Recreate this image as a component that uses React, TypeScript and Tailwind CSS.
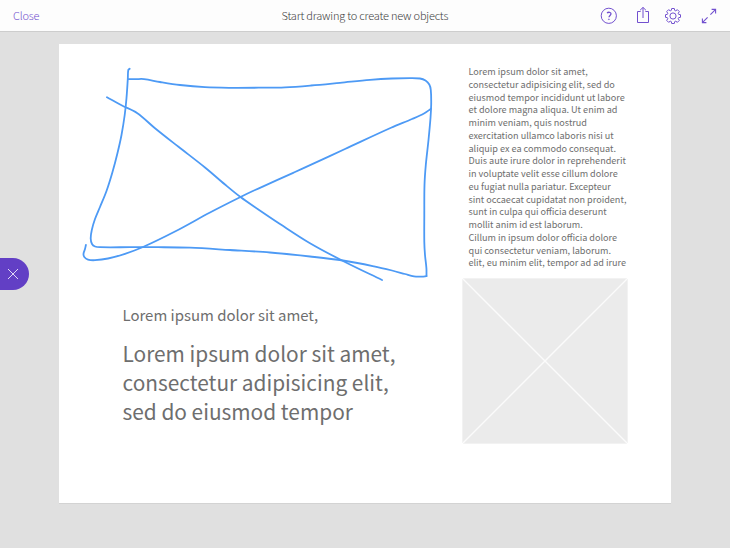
const bodyLines = [
  'Lorem ipsum dolor sit amet,',
  'consectetur adipisicing elit, sed do',
  'eiusmod tempor incididunt ut labore',
  'et dolore magna aliqua. Ut enim ad',
  'minim veniam, quis nostrud',
  'exercitation ullamco laboris nisi ut',
  'aliquip ex ea commodo consequat.',
  'Duis aute irure dolor in reprehenderit',
  'in voluptate velit esse cillum dolore',
  'eu fugiat nulla pariatur. Excepteur',
  'sint occaecat cupidatat non proident,',
  'sunt in culpa qui officia deserunt',
  'mollit anim id est laborum.',
  'Cillum in ipsum dolor officia dolore',
  'qui consectetur veniam, laborum.',
  'elit, eu minim elit, tempor ad ad irure',
];

const headingLines = ['Lorem ipsum dolor sit amet,', 'consectetur adipisicing elit,', 'sed do eiusmod tempor'];

type Point = [number, number];

// Each stroke is a list of pen samples, joined by a smooth curve.
const strokes: Point[][] = [
  [[129.7, 68.8], [128.3, 70], [127.8, 79], [126.5, 98], [124.7, 115], [121.5, 135], [117.5, 153], [112.5, 172], [106.5, 191], [100, 207], [95, 219], [91.8, 230], [90.7, 238.5], [92, 244], [95, 246.5], [100, 247.2], [130, 247.2], [158, 247.2], [190, 247.7], [230, 250], [270, 252.5], [310, 256.5], [343, 260.5], [374, 266.3], [392, 270.5], [405, 274], [414, 276.4], [422, 276.6], [426.5, 276.1]],
  [[426.5, 276.1], [426.4, 268], [425, 255], [424.3, 242], [424.3, 215], [424.5, 185], [425.8, 165], [428.5, 140], [430.5, 118], [431.2, 104], [430.8, 90], [429.3, 84.5], [425.5, 80.5], [420, 78.5], [410, 78.1], [392, 78.5], [370, 79.9], [340, 82.8], [311, 85.5], [285, 87.3], [260, 87.7], [230, 87.8], [205, 87.2], [180, 85], [160, 82], [144, 79.1], [136, 79.1], [128.5, 79.1]],
  [[107, 97.3], [122, 105.5], [137, 113], [155, 128.2], [178.5, 146.8], [205, 167.5], [225, 184.5], [240.5, 197], [258, 209.2], [280, 224], [310, 243.2], [345, 262], [382, 280]],
  [[431, 108.7], [424, 113.5], [412, 119], [391, 127.8], [345, 149], [295, 172], [254.5, 190.3], [240.5, 197], [210, 212.5], [175, 231.5], [143, 247], [125, 253.8], [108, 258.5], [95, 260.2], [88, 259.6], [84.3, 257], [83.5, 253.8], [85, 249], [85.9, 245]],
];

function smoothPath(points: Point[]) {
  let d = `M${points[0].join(' ')}`;
  for (let i = 0; i < points.length - 1; i++) {
    const before = points[Math.max(0, i - 1)];
    const from = points[i];
    const to = points[i + 1];
    const after = points[Math.min(points.length - 1, i + 2)];
    const length = Math.hypot(to[0] - from[0], to[1] - from[1]);
    const startSpan = Math.hypot(to[0] - before[0], to[1] - before[1]);
    const endSpan = Math.hypot(after[0] - from[0], after[1] - from[1]);
    const a = length / (3 * startSpan);
    const b = length / (3 * endSpan);
    d += `C${from[0] + (to[0] - before[0]) * a} ${from[1] + (to[1] - before[1]) * a} ${to[0] - (after[0] - from[0]) * b} ${to[1] - (after[1] - from[1]) * b} ${to[0]} ${to[1]}`;
  }
  return d;
}

function HelpIcon() {
  return (
    <svg className="h-[18px] w-[18px]" viewBox="0 0 18 18" fill="none" stroke="currentColor">
      <circle cx="8.8" cy="8.8" r="7.6" strokeWidth="1" />
      <path d="M7 5.9C8.4 4.900 11 5 11 6.800c0 1.600-2 1.800-2 3.500" strokeWidth="1.3" />
      <circle cx="8.9" cy="12.3" r=".45" fill="currentColor" strokeWidth=".6" />
    </svg>
  );
}

function ShareIcon() {
  return (
    <svg className="h-[18px] w-[14px]" viewBox="0 0 14 18" fill="none" stroke="currentColor">
      <path d="M4.6 4.5H1.5v11h11v-11H9.4M7 11V.6M4.1 3.2 7 .4l2.900 2.800" strokeWidth="1" />
    </svg>
  );
}

function GearIcon() {
  return (
    <svg className="h-[18px] w-[18px]" viewBox="-9 -9 18 18" fill="none" stroke="currentColor" strokeLinejoin="round">
      <circle r="3.1" strokeWidth="1" />
      <path
        strokeWidth="1"
        d="M-1.3-7.500H1.300L1.700-5.600 2.700-5.200 4.400-6.300 6.300-4.400 5.200-2.700 5.600-1.700 7.500-1.300V1.300L5.600 1.700 5.200 2.700 6.300 4.400 4.400 6.300 2.700 5.200 1.700 5.600 1.300 7.500H-1.300L-1.700 5.600-2.700 5.200-4.400 6.300-6.300 4.400-5.200 2.700-5.600 1.700-7.500 1.300V-1.300L-5.600-1.700-5.200-2.700-6.300-4.400-4.400-6.300-2.700-5.200-1.700-5.600Z"
      />
    </svg>
  );
}

function ExpandIcon() {
  return (
    <svg className="h-4 w-4" viewBox="0 0 16 16" fill="none" stroke="currentColor">
      <path d="M10.600 1.400h4v4M14.400 1.600 9.400 6.600M5.400 14.600h-4v-4M1.600 14.400 6.600 9.400" strokeWidth="1.1" />
    </svg>
  );
}

function Sketch() {
  return (
    <svg
      className="pointer-events-none absolute left-0 top-0 h-[459px] w-[612px]"
      viewBox="59 44 612 459"
      fill="none"
      stroke="#4d9af5"
      strokeWidth="1.8"
      strokeLinecap="round"
      strokeLinejoin="round"
      shapeRendering="geometricPrecision"
    >
      {strokes.map((points, index) => <path key={index} d={smoothPath(points)} />)}
    </svg>
  );
}

export default function App() {
  return (
    <div className="flex h-[548px] w-[730px] flex-col overflow-hidden bg-[#e0e0e0] font-['Noto_Sans_CJK_SC','Noto_Sans',sans-serif] text-[#6e6e6e]">
      <header className="flex h-8 shrink-0 items-center border-b border-[#cdcdcd] bg-[#fdfdfd] px-[13px] text-[#7250cf]">
        <button className="w-[268.5px] shrink-0 -translate-y-px text-left text-[11px] font-light leading-4 tracking-[-0.2px]">Close</button>
        <h1 className="w-[318.5px] shrink-0 -translate-y-px whitespace-nowrap text-[11px] font-light leading-4 tracking-[-0.2px] text-[#404040]">
          Start drawing to create new objects
        </h1>
        <div className="flex flex-1 items-center">
          <HelpIcon />
          <div className="ml-[18px]"><ShareIcon /></div>
          <div className="ml-[14px]"><GearIcon /></div>
          <div className="ml-auto"><ExpandIcon /></div>
        </div>
      </header>
      <main className="flex flex-1 pt-3">
        <aside className="w-[59px] shrink-0 pt-[214px]">
          <button className="flex h-8 w-[29px] items-center rounded-r-full bg-[#623fc5] pl-[7px]">
            <svg className="h-3 w-3" viewBox="0 0 12 12" stroke="#e0d8f6" strokeWidth="1">
              <path d="m1 1 10 10M11 1 1 11" />
            </svg>
          </button>
        </aside>
        <section className="relative flex h-[460px] w-[612px] border-b border-[#d3d3d3] bg-white">
          <div className="w-[403px] shrink-0 whitespace-nowrap pl-[63.5px] pt-[260px]">
            <p className="text-[14.95px] leading-[22px]">Lorem ipsum dolor sit amet,</p>
            <h2 className="mt-[13px] text-[20.85px] leading-[29.2px]">
              {headingLines.map((line) => <span key={line} className="block">{line}</span>)}
            </h2>
          </div>
          <div className="w-[166px] pt-[21px]">
            <p className="h-[213px] whitespace-nowrap pl-[6.5px] text-[9.1px] leading-[12.77px]">
              {bodyLines.map((line) => <span key={line} className="block">{line}</span>)}
            </p>
            <svg className="block h-[166px] w-[166px]" viewBox="0 0 166 166">
              <rect x=".5" y=".5" width="165" height="165" rx="1.5" fill="#ebebeb" stroke="#f2f2f2" />
              <path d="m1 1 164 164M165 1 1 165" stroke="#fbfbfb" strokeWidth="1.4" />
            </svg>
          </div>
          <Sketch />
        </section>
      </main>
    </div>
  );
}
